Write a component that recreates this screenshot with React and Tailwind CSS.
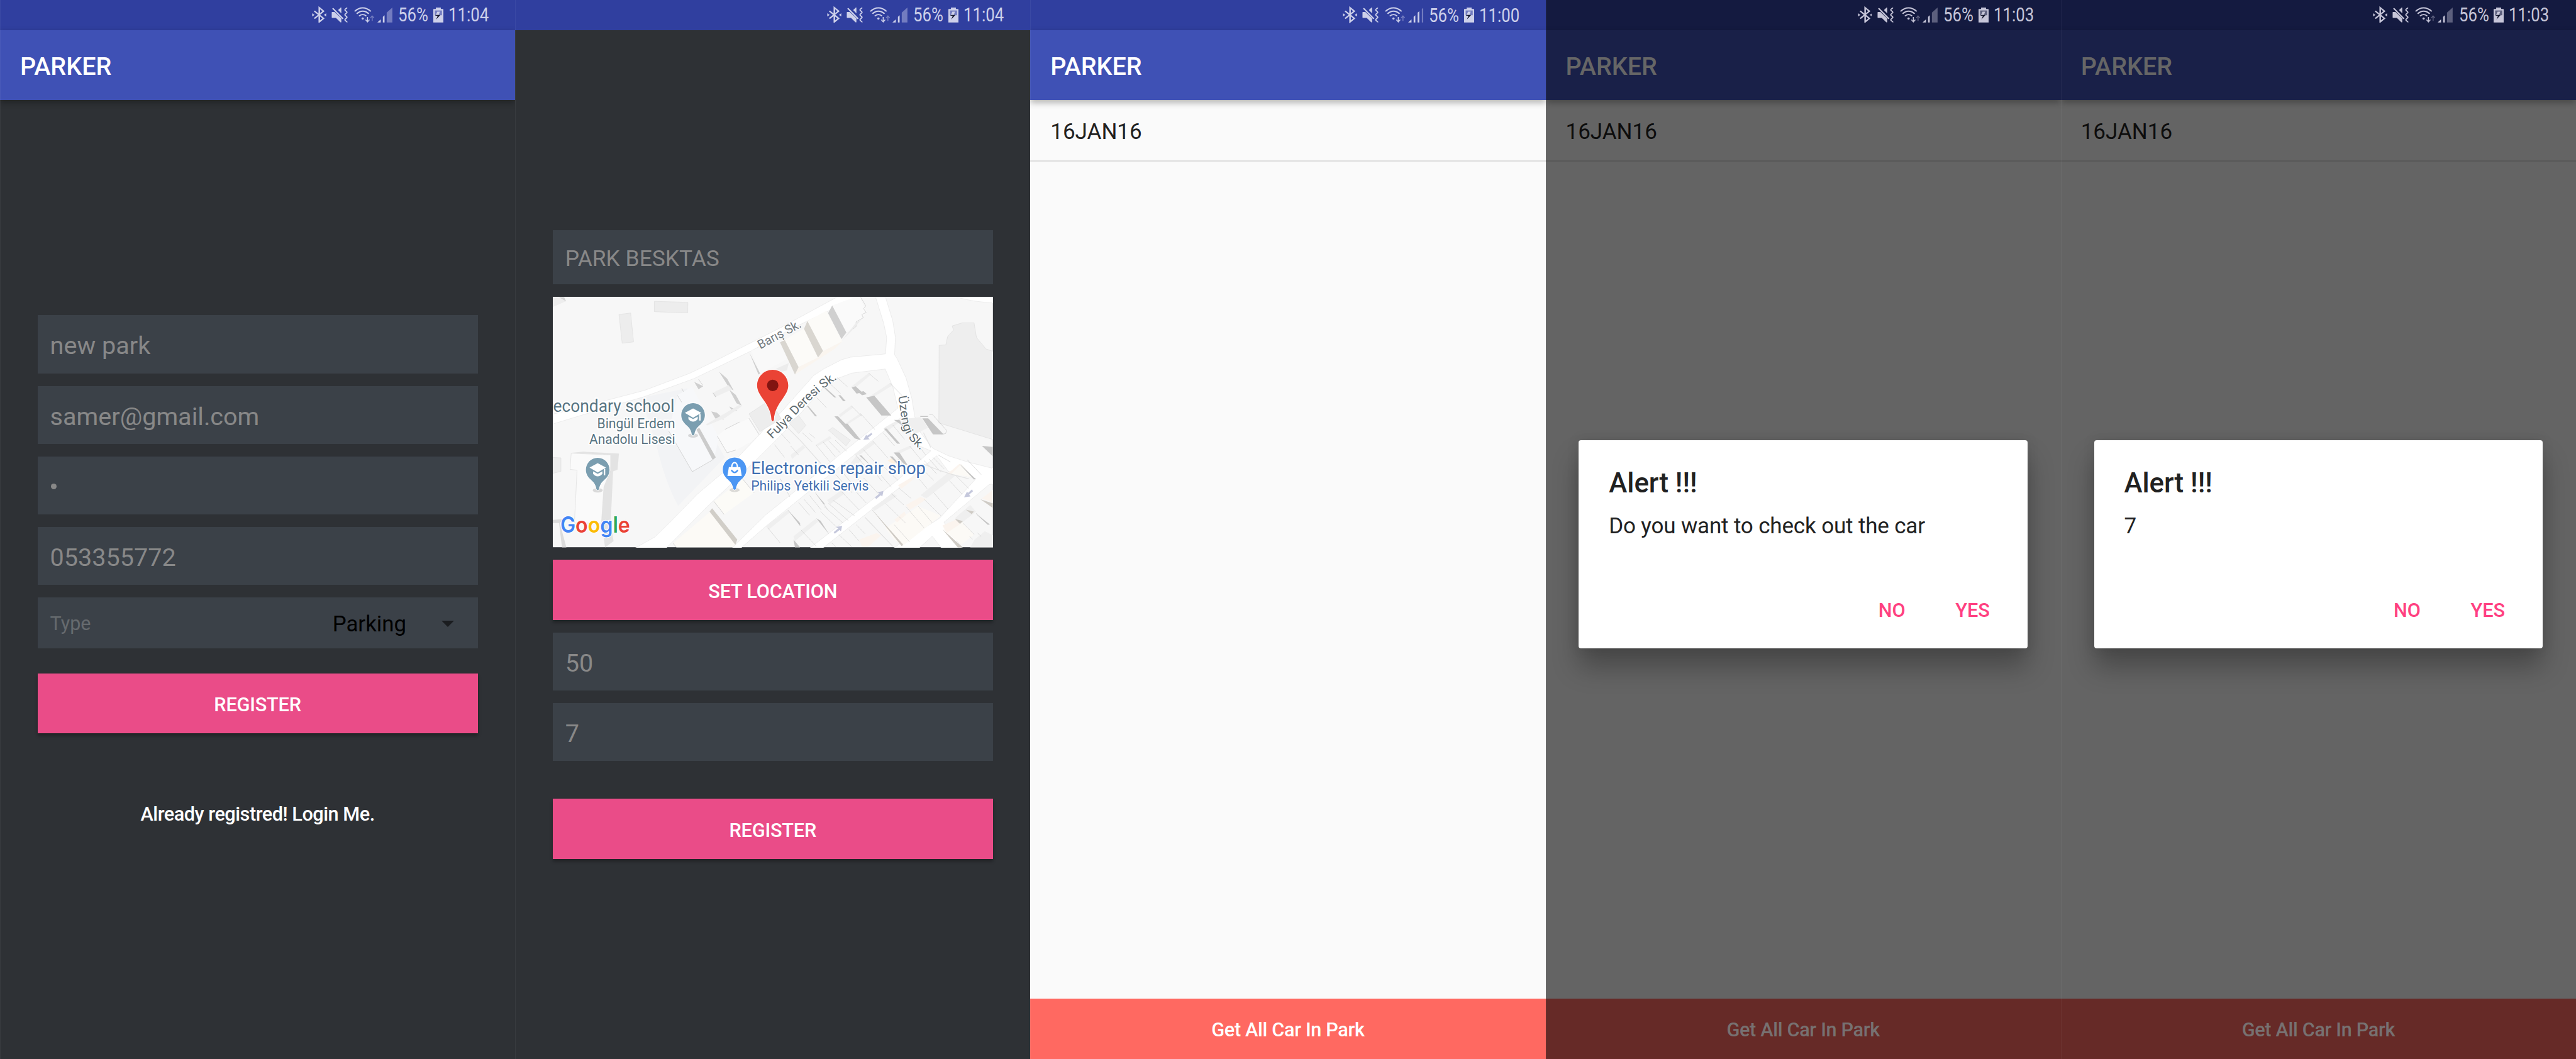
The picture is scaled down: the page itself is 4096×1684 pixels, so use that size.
import React from "react";

const BARS = {
  wide: "M607 103L647 60V186H607Z",
  thin: "M638 72L649 62V186H638Z",
};

function StatusBar({ time, signal = 2, dim = false, shift = false }) {
  const ink = dim ? "text-[#c6c5d8]" : "text-[#cdd0ea]";
  const bg = dim ? "bg-[#141a40]" : "bg-[#303f9f]";
  const faded = dim ? "#5c5f7d" : "#737cc0";
  return (
    <div className={`flex h-[47.8px] shrink-0 items-start justify-end ${bg} ${ink} ${shift ? "pr-[41.9px] pt-[10.2px]" : "pr-[42.6px] pt-[9.5px]"}`}>
      {/* bluetooth */}
      <svg className="h-[26.55px] w-[22.9px] shrink-0" viewBox="80 50 102 140" preserveAspectRatio="none" fill="none" stroke="currentColor" strokeWidth="11">
        <path d="M97 90L162 151L132 181V62L162 91L97 153" />
        <path d="M82 108L98 122L82 136ZM181 108L165 122L181 136Z" fill="currentColor" stroke="none" />
      </svg>
      {/* muted, vibrating */}
      <svg className="ml-[8.1px] h-[26.55px] w-[26.1px] shrink-0" viewBox="218 50 116 140" preserveAspectRatio="none" fill="currentColor">
        <path d="M220 100Q220 97 224 97H240L288 152V184H282L250 148H224Q220 148 220 144ZM265 82L284 61H288V109Z" />
        <path d="M227 67L300 155" stroke="currentColor" strokeWidth="10" />
        <path d="M328 62C322 72 311 72 314 82C318 92 331 94 327 103C322 112 311 114 314 124C318 134 331 135 327 145C322 154 311 156 314 166C317 174 328 176 328 184" fill="none" stroke="currentColor" strokeWidth="9" />
      </svg>
      {/* wifi with data arrows */}
      <svg className="ml-[10.3px] h-[26.55px] w-[32.4px] shrink-0" viewBox="380 50 144 140" preserveAspectRatio="none" fill="none" stroke="currentColor" strokeWidth="10">
        <path d="M384 93Q412 63 441 63T499 93M399 113Q418 91 441 91T484 113M415 132Q427 119 441 119T467 132" />
        <ellipse cx="441" cy="153" rx="8" ry="9" fill="currentColor" stroke="none" />
        <path d="M475 140V180M461 163L475 181L489 163" strokeWidth="7" />
        <path d="M508 172V132M495 148L508 131L521 148" strokeWidth="7" stroke={faded} />
      </svg>
      {/* mobile signal */}
      <svg className="ml-[3.8px] h-[26.55px] w-[24.3px] shrink-0" viewBox="541 50 108 140" preserveAspectRatio="none" fill="currentColor">
        <path d="M541 186L565 159V186ZM580 138L592 125V186H580Z" />
        {signal === 3 && <path d="M608 104L620 91V186H608Z" />}
        <path d={signal === 3 ? BARS.thin : BARS.wide} fill={faded} />
      </svg>
      <span className="ml-[9px] mt-[-3.5px] w-[46px] origin-left scale-x-[0.845] whitespace-nowrap text-[30.5px] leading-[36px]">56%</span>
      {/* charging battery */}
      <svg className="ml-[9.8px] h-[26.55px] w-[16px] shrink-0" viewBox="937 50 71 140" preserveAspectRatio="none" fill="currentColor">
        <path d="M955 72V60H990V72H1004Q1008 72 1008 77V186H937V77Q937 72 941 72Z" />
        <path d="M948 85H998V125H948Z" fill={faded} />
        <path d="M965 95H984L975 123H988L984 127H953Z" />
        <path d="M952 123H987L957 161L968 129H952Z" fill="#14182e" />
      </svg>
      <span className="ml-[8px] mt-[-3.5px] w-[64px] origin-left scale-x-[0.845] whitespace-nowrap text-[30.5px] leading-[36px]">{time}</span>
    </div>
  );
}

function AppBar({ dim = false }) {
  return (
    <div className={`relative z-10 flex h-[111.5px] shrink-0 items-center pl-[31.9px] pt-[4px] text-[39.5px] font-medium leading-none shadow-[0_4px_10px_rgba(0,0,0,0.3)] ${dim ? "bg-[#192048] text-[#666666]" : "bg-[#3f51b5] text-white"}`}>
      PARKER
    </div>
  );
}

function Screen({ className, children }) {
  return (
    <section className={`relative flex h-full min-w-0 flex-col overflow-hidden ${className}`}>
      {children}
      <div className="pointer-events-none absolute inset-y-0 left-0 z-20 w-px bg-white/5" />
    </section>
  );
}

function Field({ children, className = "" }) {
  return (
    <div className={`flex items-center bg-[#3b4148] pl-[19.9px] leading-none text-[#888888] ${className || "h-[92.3px] pt-[5px] text-[39.6px]"}`}>
      {children}
    </div>
  );
}

function PinkButton({ children, className = "" }) {
  return (
    <button className={`flex h-[95.6px] w-full items-center justify-center bg-[#ea4c88] pt-[6px] text-[30.7px] font-medium leading-none tracking-[-0.2px] text-white shadow-[0_4px_5px_rgba(0,0,0,0.3)] ${className}`}>
      {children}
    </button>
  );
}

function SignUp() {
  return (
    <Screen className="bg-[#2e3135]">
      <StatusBar time="11:04" />
      <AppBar />
      <div className="flex flex-col px-[59.7px] pt-[342.2px]">
        <div className="flex flex-col gap-[19.9px]">
          <Field>new park</Field>
          <Field>samer@gmail.com</Field>
          <Field>
            <span className="mb-[3px] ml-[1.8px] h-[9px] w-[9px] rounded-full bg-[#888888]" />
          </Field>
          <Field>053355772</Field>
          <div className="flex h-[80.5px] items-center bg-[#3b4148] pl-[19.9px] pr-[37.5px] pt-[3px] leading-none">
            <span className="pt-[1px] text-[30.5px] text-[#666a6e]">Type</span>
            <span className="ml-auto text-[34.8px] text-black">Parking</span>
            <svg className="ml-[56px] h-[10px] w-[20px]" viewBox="0 0 20 10">
              <path d="M0 0H20L10 10Z" fill="#1b1d20" />
            </svg>
          </div>
        </div>
        <PinkButton className="mt-[39.9px]">REGISTER</PinkButton>
        <p className="mt-[111px] text-center text-[30.7px] font-medium leading-[36px] tracking-[-0.48px] text-white">Already registred! Login Me.</p>
      </div>
    </Screen>
  );
}

const CROP = "matrix(.40816 0 0 .45918 -4.9 -10.33)";
const HALO = { paintOrder: "stroke", stroke: "#ffffff", strokeWidth: 7, strokeLinejoin: "round" };

function MapPin({ x, y, color, children }) {
  return (
    <g transform={`translate(${x} ${y})`}>
      <ellipse cx="0" cy="91" rx="14" ry="6" fill="#000" opacity=".13" />
      <path d="M0 0C18.500 0 33 15 33 33.500C33 49 24 57 15 65C8 71 5 79 3.500 88Q0 93-3.500 88C-5 79-8 71-15 65C-24 57-33 49-33 33.500C-33 15-18.500 0 0 0Z" fill={color} stroke="#fff" strokeWidth="3" paintOrder="stroke" />
      {children}
    </g>
  );
}

function SchoolPin({ x, y }) {
  return (
    <MapPin x={x} y={y} color="#7b9eb0">
      <path d="M0 15L23 27.500L0 41L-23 27.500ZM17 31H21V49H17Z" fill="#fff" />
      <path d="M-13 38L0 45L13 38V45Q7 52 0 52T-13 45Z" fill="#fff" />
    </MapPin>
  );
}

/* Runs of roofs and party walls that fill the dense blocks between the streets. */
function RoofLines() {
  return (
    <g fill="none" stroke="#cacaca" strokeWidth="2.500">
      <path d="M705 487L770 537M850 548L935 625M490 515L560 570M435 548L512 610M585 685L658 750M648 732L747 830M350 637L416 698M105 855L168 915M170 930L225 985M60 922L128 1000M250 850L318 905M300 855L338 884M345 925L440 1028M392 905L478 998M430 898L510 972M475 895L553 962" />
      <path d="M733 900L838 1005M668 952L780 1062M803 850L882 930M870 803L950 890M905 775L965 830M615 985L722 1098M700 1040L796 1145M985 930L1066 1018M1025 905L1095 985M905 1010L990 1095M1060 1060L1150 1140M1085 1020L1170 1100M1180 985L1265 1028M1118 1010L1200 1090M1145 1000L1222 1070" />
      <path d="M560 1060L660 1160M520 1085L625 1195M480 1105L590 1215M670 1125L770 1220M800 1050L905 1140M760 1080L860 1180M600 1190L688 1278M520 1210L640 1320M460 1260L608 1355M430 1280L565 1385M400 1300L530 1400M375 1330L492 1430M225 1275L300 1352M262 1255L340 1335M300 1232L380 1320M340 1215L425 1318" />
      <path d="M15 1430L98 1520M152 1320L235 1415M240 1440L345 1540M100 1130L165 1240M30 1160L90 1200M570 1440L640 1510M620 1410L680 1465M500 1470L590 1545M450 1520L480 1545M680 1365L870 1542M730 1320L940 1538M820 1280L958 1400M880 1410L985 1515M860 1220L945 1290M960 1300L1085 1430M1045 1298L1140 1398M1085 1255L1200 1355M1150 1215L1248 1315M910 1185L995 1250M1030 1110L1105 1190M1258 1142L1345 1225M1300 1110L1390 1190M1335 1045L1435 1132M1380 1015L1475 1105M1350 1400L1428 1470M1440 1340L1530 1410M1450 1460L1475 1482M1395 1480L1415 1498" />
    </g>
  );
}

function StreetMap() {
  return (
    <svg className="block h-[398.2px] w-full" viewBox="0 0 1230 700" preserveAspectRatio="none">
      <rect width="1230" height="700" fill="#f7f7f7" />
      <g transform={CROP}>
        {/* park, school grounds and tinted lots */}
        <path d="M600 640L930 580L1060 800L1190 1000L870 1295Q780 1150 720 920L640 700Z" fill="#f2f3f5" />
        <path d="M865 622L965 570L1150 880L1115 1010L967 1087L805 838Z" fill="#f7f8fa" />
        <path d="M835 1522L1090 1330L1270 1530L1250 1548H860Z" fill="#fcfaf6" />
        <path d="M1115 1268L1310 1130L1390 1215L1185 1347Z" fill="#fcfbf7" />
        {/* roads */}
        <g fill="#fff" stroke="#e6e6e6" strokeWidth="3">
          <path d="M0 740L370 655L530 618L640 592L950 488L1130 410L1568 212L1950 28L1990 10H2140L2060 40L1650 215L1370 352L980 520L640 630L370 700L0 800Z" />
          <path d="M560 1560L710 1485L820 1390L1000 1225L1180 1090L1440 850L1470 810L1570 730L1800 500L1870 460L1990 405L2050 390L2290 370L2298 270L2278 185L2227 38L2215 10H2285L2340 170L2358 270L2352 375L2370 400L2430 515L2470 640L2490 750L2530 850L2615 945L2720 990L2860 1030L3040 1070V1160L3000 1165L2690 1395L2740 1460L2820 1560H2680L2610 1480L2510 1560H2330L2660 1370L2910 1130L2720 1085L2640 990L2420 1160L1850 1560H1760L2370 1140L2600 960L2520 930L2440 830L2400 755L2110 960L1470 1420L1290 1560H1230L1470 1350L1630 1235L2010 960L2375 700L2340 570L2288 462L2060 487L1960 520L1870 570L1580 860L1410 1010L1260 1140L1080 1290L880 1470L780 1560Z" />
          <path d="M2770 22Q2890 55 3040 60V10H2760Z" />
        </g>
        {/* footprint outlines on the left */}
        <g fill="#ededed" stroke="#e0e0e0" strokeWidth="3">
          <path d="M465 130L545 121L565 297L487 305Z" />
          <path d="M707 50L937 56L936 120L820 117L707 113Z" />
          <path d="M1355 735L1500 650L1575 765L1430 843Z" />
          <path d="M0 1000L68 1003V1085L0 1100Z" />
        </g>
        <path d="M12 25H60L100 50L12 85Z" fill="#ededed" />
        <path d="M55 25H90L103 50Z" fill="#d2d2d2" />
        <path d="M140 972L220 965L465 977L455 1075L425 1085L408 1400L428 1510L370 1548L345 1400L362 1080L408 985Z" fill="#e3e3e3" />
        <path d="M138 975L408 985V1080L362 1180L345 1400L160 1400L178 1078L130 1073Z" fill="#fafafa" stroke="#dedede" strokeWidth="3" />
        <path d="M0 1382L85 1375L60 1400L105 1548H75L55 1400H0Z" fill="#dcdcdc" />
        {/* building walls on the left */}
        <g fill="#cfcfcf">
          <path d="M980 540L1042 567L1010 585ZM1150 478L1205 520L1250 592L1222 580ZM1220 587L1265 620L1305 685L1270 670ZM1105 605L1140 620L1125 633ZM1220 690L1275 715L1240 718ZM1097 720L1135 728L1185 768L1125 763Z" />
          <path d="M995 830L1015 820L1128 1000L1107 1016Z" fill="#cbcbcb" />
          <path d="M1357 360L1432 490L1420 495Z" />
        </g>
        <path d="M1110 605L1215 560L1240 585L1130 630ZM1060 800L1290 680L1305 690L1190 760L1070 805Z" fill="#eeeeee" />
        <path d="M1085 1330L1103 1310L1275 1500L1262 1532Z" fill="#d1cec8" />
        <path d="M1138 870L1190 830L1355 762L1425 862L1370 905L1268 955L1205 972Z" fill="#fafafa" />
        <path d="M1138 870L1205 972L1265 955M1355 762L1425 862M1190 830L1290 785M865 622L895 665M805 838L967 1087L1105 1016M895 580L907 600M1010 525L1040 562M1115 1268L1185 1347M1310 1130L1390 1215M835 1522L858 1548" fill="none" stroke="#c8c8c8" strokeWidth="3" />
        <path d="M1370 352L1555 280L1620 400L1432 490Z" fill="#f9f9f9" />
      </g>
      <g transform="translate(600 0)">
        <g transform={CROP}>
          {/* buildings beside the top street */}
          <path d="M455 75L640 15L690 115L650 160L605 215L552 240Z" fill="#fafafa" />
          <path d="M650 25L685 78L670 95L688 118L658 130L668 150L618 175L622 200L600 218" fill="none" stroke="#cccccc" strokeWidth="3" />
          <path d="M427 122L455 75L552 240L518 280Z" fill="#d0d0d0" />
          <path d="M285 170L415 108L525 293L388 355Z" fill="#fcfbf8" />
          <path d="M130 285L262 215L358 392L225 450Z" fill="#fcfbf8" />
          <path d="M225 450L358 392L345 412L200 495ZM390 355L525 293L470 340L345 412Z" fill="#faf5ef" />
          <path d="M262 218L285 170L392 352L358 392ZM98 300L130 285L225 450L200 495Z" fill="#d9d6d0" />
          <path d="M70 460L158 425L145 470L110 478Z" fill="#ececec" />
          <path d="M518 293L618 180L660 155L600 218Z" fill="#ededed" />
          {/* large civic footprint */}
          <path d="M1187 318L1233 315L1245 265L1286 224L1276 200L1345 181H1426L1443 270L1508 340L1568 358V895L1185 790Z" fill="#eeeeee" stroke="#dedede" strokeWidth="3" />
          {/* shaded blocks */}
          <g fill="#efefef">
            <path d="M585 570L705 487L720 495L610 580ZM700 635L850 548L870 560L745 628ZM500 740L585 685L600 695L510 755ZM545 795L648 732L660 742L560 800Z" />
            <path d="M160 790L225 745L275 805L225 855Z" stroke="#dedede" strokeWidth="2.500" />
            <path d="M430 835L458 818L580 895L550 930L500 890Z" stroke="#dedede" strokeWidth="2.500" />
            <path d="M810 820L910 770L1060 755L1110 820L1020 860L940 770L840 835ZM600 985L735 900L750 915L640 985ZM880 970L985 930L1000 940L910 980ZM340 925L440 870L450 885L360 930Z" />
            <path d="M1060 1230L1245 1095L1300 1110L1100 1250ZM725 1310L870 1220L900 1235L745 1325ZM190 1480L340 1375L360 1390L200 1510ZM0 1420L150 1320L165 1335L20 1440ZM1295 1370L1400 1290L1440 1330L1340 1400ZM1430 1500L1500 1450L1568 1480V1548H1400Z" />
            <path d="M560 1060L620 990L660 1010L590 1080ZM420 1260L520 1200L540 1220L440 1285ZM170 985L255 925L270 940L180 1010Z" />
          </g>
          <g fill="#fcfaf6">
            <path d="M820 1430L1045 1298L1200 1355L940 1538L880 1500ZM1245 1095L1340 1040L1435 1132L1400 1120ZM1215 1440L1340 1390L1428 1470L1340 1530Z" />
            <path d="M905 1170L1010 1115L1030 1120L930 1190ZM960 1290L1060 1240L1100 1255L985 1320ZM640 1500L760 1460L790 1475L700 1545H660ZM1245 1100L1325 1040L1335 1045L1270 1100ZM1210 1415L1300 1380L1340 1400L1240 1460ZM880 1380L950 1330L960 1350L900 1395ZM1480 1250L1568 1190V1280Z" fill="#fbf4ee" />
            <path d="M835 1020L860 1005L890 1035L870 1040Z" fill="#fdf1e0" />
          </g>
          <RoofLines />
          {/* dark walls */}
          <g fill="#c6c6c6">
            <path d="M588 575L615 567L655 600L670 597L692 615L660 622L640 608L622 612ZM688 635L743 625L860 745H792ZM470 750H495L545 795L560 795L652 895L610 885L540 820ZM497 622H512L548 658H530ZM385 565L400 568L484 635H470ZM280 686L292 688L352 750H338Z" />
            <path d="M1072 762H1112L1218 860H1145ZM1055 748H1115L1108 754H1060ZM1480 930L1568 938V1005ZM878 772H915L970 840L925 800ZM808 825H828L920 916H900ZM875 970H915L970 1045H950ZM848 993L868 995L935 1060L920 1058ZM640 988H655L720 1050L700 1035Z" />
            <path d="M345 1370L375 1385L435 1470ZM190 1500L235 1548H200ZM340 1218L402 1280L400 1290ZM152 1320L235 1400L236 1418ZM1325 1040L1438 1132L1425 1135ZM1435 1340L1535 1408L1520 1410Z" />
            <path d="M1210 1438L1350 1548H1315ZM728 1318L940 1530L930 1540ZM1470 1255L1555 1280V1308ZM1295 1375L1350 1388L1330 1405ZM1370 1318L1425 1330L1410 1345Z" fill="#cfcbc5" />
          </g>
          <path d="M1120 740L1140 738L1238 835L1232 855L1200 860" fill="none" stroke="#cccccc" strokeWidth="3" />
          <path d="M150 820L240 900L400 1060M680 1365L870 1542M1080 850L1130 940M1080 1040Q1220 1095 1390 1130" fill="none" stroke="#e3e3e3" strokeWidth="5" />
          {/* one-way arrows */}
          <g fill="#c5c8dc">
            <path d="M668 893L688 862L693 870L724 850L730 860L700 880L712 890Z" />
            <path d="M1358 1243L1378 1208L1385 1216L1412 1195L1419 1206L1393 1227L1402 1238Z" />
            <path d="M806 1205L798 1238L788 1230L756 1253L748 1243L779 1220L765 1212Z" />
            <path d="M523 1417L515 1450L505 1442L473 1465L465 1455L496 1432L482 1424Z" />
          </g>
        </g>
      </g>

      {/* street names */}
      <g fontFamily="Roboto, sans-serif" fontSize="35" fill="#737b80" style={{ ...HALO, strokeWidth: 4 }}>
        <text transform="translate(580 147) rotate(-28.500)" textLength="133" lengthAdjust="spacingAndGlyphs">Barış Sk.</text>
        <path id="fulya" d="M613 398C668 347 716 280 800 226" fill="none" stroke="none" />
        <path id="uzengi" d="M965 278C975 330 972 362 992 392C1004 408 1020 420 1042 442" fill="none" stroke="none" />
        <text fill="#5f6b70"><textPath href="#fulya" textLength="249" lengthAdjust="spacingAndGlyphs">Fulya Deresi Sk.</textPath></text>
        <text fill="#5f6b70" fontSize="33"><textPath href="#uzengi" textLength="170" lengthAdjust="spacingAndGlyphs">Üzengi Sk.</textPath></text>
      </g>

      {/* places */}
      <g fontFamily="Roboto, sans-serif" style={HALO}>
        <g fill="#587482" textAnchor="end">
          <text x="340" y="321" fontSize="49" textLength="339" lengthAdjust="spacingAndGlyphs">econdary school</text>
          <text x="342" y="368" fontSize="37.500" textLength="218" lengthAdjust="spacingAndGlyphs">Bingül Erdem</text>
          <text x="342" y="412" fontSize="37.500" textLength="240" lengthAdjust="spacingAndGlyphs">Anadolu Lisesi</text>
        </g>
        <g fill="#3f6fb1">
          <text x="554" y="496" fontSize="49" textLength="488" lengthAdjust="spacingAndGlyphs">Electronics repair shop</text>
          <text x="554" y="541.500" fontSize="37.500" textLength="329" lengthAdjust="spacingAndGlyphs">Philips Yetkili Servis</text>
        </g>
      </g>
      <SchoolPin x={392} y={297} />
      <SchoolPin x={125.5} y={450} />
      <MapPin x={508} y={449} color="#4b96f3">
        <path d="M-16 27H16L20 52H-20Z" fill="#fff" />
        <path d="M-8 28C-8 10 8 10 8 28" fill="none" stroke="#fff" strokeWidth="4" />
        <path d="M-9 35Q0 49 9 35" fill="none" stroke="#4b96f3" strokeWidth="4" />
      </MapPin>
      <path d="M614.500 204C639 204 658 224 658 248C658 262 651 272 643 284C631 301 619 318 618 344Q614.500 352 611 344C610 318 598 301 586 284C578 272 571 262 571 248C571 224 590 204 614.500 204Z" fill="#ea4335" stroke="#fff" strokeWidth="3" paintOrder="stroke" />
      <circle cx="614.500" cy="247.500" r="16" fill="#811411" />

      <text x="21" y="660" fontFamily="Inter, sans-serif" fontSize="62" fontWeight="600" textLength="195" lengthAdjust="spacingAndGlyphs" style={{ ...HALO, strokeWidth: 4 }}>
        <tspan fill="#4285f4">G</tspan>
        <tspan fill="#ea4335">o</tspan>
        <tspan fill="#fbbc05">o</tspan>
        <tspan fill="#4285f4">g</tspan>
        <tspan fill="#34a853">l</tspan>
        <tspan fill="#ea4335">e</tspan>
      </text>
    </svg>
  );
}

function ParkSetup() {
  return (
    <Screen className="bg-[#2e3135]">
      <StatusBar time="11:04" />
      <div className="flex flex-col gap-[19.9px] px-[59.7px] pt-[318.5px]">
        <Field className="h-[86.2px] pt-[5px] text-[35.4px]">PARK BESKTAS</Field>
        <StreetMap />
        <PinkButton>SET LOCATION</PinkButton>
        <Field>50</Field>
        <Field>7</Field>
        <PinkButton className="mt-[39.9px]">REGISTER</PinkButton>
      </div>
    </Screen>
  );
}

function Dialog({ message }) {
  return (
    <div className="absolute left-[52.8px] top-[699.7px] z-20 flex h-[331.2px] w-[713.5px] flex-col rounded-[4px] bg-white pb-[42px] pl-[47.8px] pr-[60px] pt-[43.2px] shadow-[0_30px_42px_rgba(0,0,0,0.28),0_0_20px_rgba(0,0,0,0.1)]">
      <h2 className="text-[43.8px] font-medium leading-[51.3px] text-[#212121]">Alert !!!</h2>
      <p className="mt-[21.6px] text-[35px] leading-[41px] tracking-[-0.16px] text-[#212121]">{message}</p>
      <div className="mt-auto flex justify-end gap-[79.5px] text-[30.7px] font-medium leading-[36px] text-[#ff4081]">
        <button>NO</button>
        <button>YES</button>
      </div>
    </div>
  );
}

function CarList({ time, signal, dialog }) {
  const dim = Boolean(dialog);
  return (
    <Screen className={dim ? "bg-[#646464]" : "bg-[#fafafa]"}>
      <StatusBar time={time} signal={signal} dim={dim} shift={!dim} />
      <AppBar dim={dim} />
      <div className={`flex h-[97.6px] shrink-0 items-center border-b-2 pl-[31.9px] pt-[4px] text-[35px] leading-none ${dim ? "border-[#585858] text-[#0d0d0d]" : "border-[#dddddd] text-[#212121]"}`}>
        16JAN16
      </div>
      <div className={`mt-auto flex h-[96.2px] shrink-0 items-center justify-center pt-[4px] text-[30.7px] font-medium leading-none tracking-[-0.35px] ${dim ? "bg-[#662a27] text-[#777171]" : "bg-[#ff6961] text-white"}`}>
        Get All Car In Park
      </div>
      {dim && <Dialog message={dialog} />}
    </Screen>
  );
}

export default function App() {
  return (
    <main className="grid h-[1684px] w-[4096px] grid-cols-5 overflow-hidden bg-[#2e3135] font-['Roboto',sans-serif]">
      <SignUp />
      <ParkSetup />
      <CarList time="11:00" signal={3} />
      <CarList time="11:03" dialog="Do you want to check out the car" />
      <CarList time="11:03" dialog="7" />
    </main>
  );
}
